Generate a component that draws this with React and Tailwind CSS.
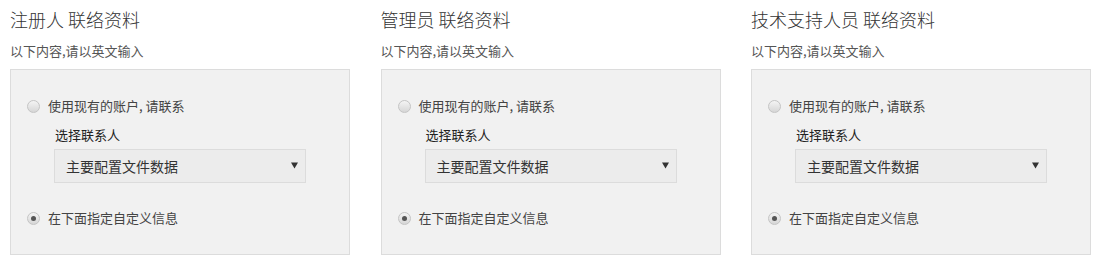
import React from "react";

const font = { fontFamily: '"Noto Sans CJK SC", "Noto Sans", sans-serif' };

function Radio({ checked }) {
  return (
    <span className="relative inline-flex h-[13px] w-[13px] shrink-0 items-center justify-center rounded-full border border-[#c4c4c4] bg-gradient-to-b from-[#f4f4f4] to-[#d6d6d6]">
      {checked && <span className="h-[5px] w-[5px] rounded-full bg-[#555]" />}
    </span>
  );
}

function Column({ title }) {
  return (
    <div className="w-[340px] shrink-0">
      <div className="h-[18px] mt-[10px] text-[18px] leading-[18px] text-[#333] font-light">{title}</div>
      <div className="mt-[16px] h-[13px] text-[13px] leading-[13px] text-[#555]">以下内容,请以英文输入</div>
      <div className="mt-[12px] h-[186px] border border-[#dcdcdc] bg-[#f1f1f1] pl-[16px] pt-[28px]">
        <div className="flex items-center gap-[8px] h-[16px] text-[13px] text-[#444]">
          <Radio />
          <span>使用现有的账户, 请联系</span>
        </div>
        <div className="ml-[28px] mt-[13px] text-[13px] leading-[16px] text-[#222]">选择联系人</div>
        <div className="ml-[27px] mt-[6px] flex h-[34px] w-[252px] items-center justify-between border border-[#dcdcdc] bg-[#ececec] pl-[11px] pr-[7px] text-[14px] text-[#333]">
          <span>主要配置文件数据</span>
          <svg width="7" height="7" viewBox="0 0 7 7" className="mb-[2px]">
            <path d="M0 0.5 H7 L3.5 6.5 Z" fill="#333" />
          </svg>
        </div>
        <div className="mt-[27px] flex items-center gap-[8px] h-[16px] text-[13px] text-[#444]">
          <Radio checked />
          <span>在下面指定自定义信息</span>
        </div>
      </div>
    </div>
  );
}

export default function App() {
  return (
    <div className="flex gap-[30.5px] bg-white pl-[10px] w-[1099px] h-[266px]" style={font}>
      <Column title="注册人 联络资料" />
      <Column title="管理员 联络资料" />
      <Column title="技术支持人员 联络资料" />
    </div>
  );
}
